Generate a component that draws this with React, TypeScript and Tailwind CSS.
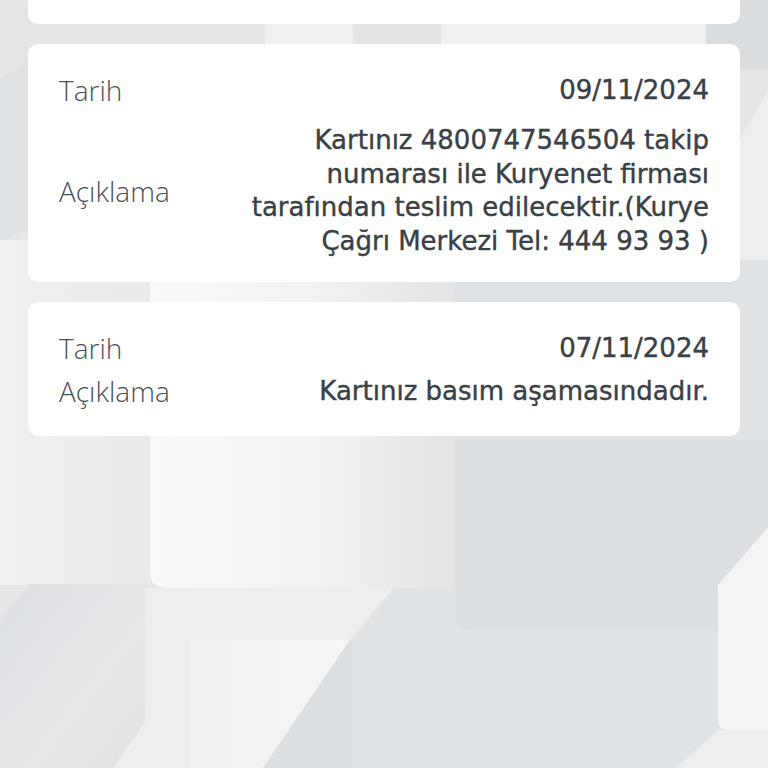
import React from "react";

type Entry = {
  date: string;
  lines: string[];
  gap: string;
  bottom: string;
};

const entries: Entry[] = [
  {
    date: "09/11/2024",
    lines: [
      "Kartınız 4800747546504 takip",
      "numarası ile Kuryenet firması",
      "tarafından teslim edilecektir.(Kurye",
      "Çağrı Merkezi Tel: 444 93 93 )",
    ],
    gap: "mt-[17px]",
    bottom: "pb-[24px]",
  },
  {
    date: "07/11/2024",
    lines: ["Kartınız basım aşamasındadır."],
    gap: "mt-[9px]",
    bottom: "pb-[28px]",
  },
];

function Backdrop() {
  return (
    <svg
      className="absolute inset-0 h-full w-full"
      viewBox="0 0 768 768"
      preserveAspectRatio="none"
    >
      <defs>
        <linearGradient id="soft" x1="0" y1="0" x2="1" y2="0">
          <stop offset="0" stopColor="#f8f9fa" />
          <stop offset="0.55" stopColor="#f0f2f3" />
          <stop offset="1" stopColor="#e2e4e6" />
        </linearGradient>
        <linearGradient id="leftcol" x1="0" y1="0" x2="1" y2="0">
          <stop offset="0" stopColor="#eef0f2" />
          <stop offset="1" stopColor="#e8eaec" />
        </linearGradient>
        <linearGradient id="hexdark" x1="0" y1="0" x2="1" y2="1">
          <stop offset="0" stopColor="#dcdfe2" />
          <stop offset="0.6" stopColor="#e6e8ea" />
          <stop offset="1" stopColor="#dfe2e4" />
        </linearGradient>
        <linearGradient id="lowlight" x1="0" y1="0" x2="1" y2="0">
          <stop offset="0" stopColor="#eef0f1" />
          <stop offset="1" stopColor="#f5f6f7" />
        </linearGradient>
      </defs>
      <rect width="768" height="768" fill="#e4e6e8" />

      {/* upper strips between cards */}
      <rect x="265" y="0" width="88" height="300" fill="#eff0f2" />
      <polygon points="441,0 706,0 706,300 441,300" fill="#eef0f1" />
      <polygon points="353,0 441,0 441,300 380,300" fill="#e2e4e6" />
      <rect x="706" y="0" width="62" height="70" fill="#dadde0" />
      <polygon points="768,90 740,140 740,440 768,440" fill="#eceef0" />
      <polygon points="0,80 28,60 28,230 0,240" fill="#dfe2e4" />

      {/* left column */}
      <rect x="0" y="240" width="150" height="345" fill="url(#leftcol)" />

      {/* darker right block */}
      <polygon points="455,260 768,260 768,768 353,768 353,640 515,440 455,440" fill="#e0e3e5" />
      <path d="M455 440 H768 V630 H470 Q455 630 455 615 Z" fill="#dcdfe2" />

      {/* light rounded panel */}
      <path d="M150 260 H455 V588 H166 Q150 588 150 572 Z" fill="url(#soft)" />

      {/* right hexagon */}
      <path d="M768 527 L718 585 V720 Q718 730 728 730 H768 Z" fill="#f3f4f5" />
      <polygon points="768,730 718,730 676,768 768,768" fill="#eceef0" />

      {/* bottom-left hexagon */}
      <path d="M0 620 L30 584 H138 Q145 584 145 591 V722 L113 768 H0 Z" fill="url(#hexdark)" />

      {/* lower middle pieces */}
      <polygon points="145,588 393,588 350,640 190,640 190,768 113,768 145,722" fill="#eceef0" />
      <polygon points="190,640 350,640 263,768 190,768" fill="url(#lowlight)" />
      <polygon points="263,768 350,640 353,640 353,768" fill="#dcdfe1" />
    </svg>
  );
}

const labelFont = { fontFamily: '"Open Sans", "Noto Sans", sans-serif' };
const valueFont = { fontFamily: '"DejaVu Sans", "Noto Sans", sans-serif' };

function HistoryCard({ entry }: { entry: Entry }) {
  return (
    <div className={`rounded-[10px] bg-white px-[31px] pt-[29px] ${entry.bottom}`}>
      <div className="flex items-center justify-between leading-[34px]">
        <span className="text-[28px] font-light text-[#4a4f54]" style={labelFont}>
          Tarih
        </span>
        <span
          className="text-[26px] text-[#394046] [-webkit-text-stroke:0.4px_#394046]"
          style={valueFont}
        >
          {entry.date}
        </span>
      </div>
      <div className={`flex items-center justify-between ${entry.gap}`}>
        <span className="text-[28px] font-light leading-[34px] text-[#4a4f54]" style={labelFont}>
          Açıklama
        </span>
        <p
          className="text-right text-[26px] leading-[33.6px] text-[#394046] [-webkit-text-stroke:0.4px_#394046]"
          style={valueFont}
        >
          {entry.lines.map((line, i) => (
            <React.Fragment key={i}>
              {line}
              {i < entry.lines.length - 1 && <br />}
            </React.Fragment>
          ))}
        </p>
      </div>
    </div>
  );
}

export default function App() {
  return (
    <div className="relative h-[768px] w-full overflow-hidden">
      <Backdrop />
      <div className="relative flex flex-col gap-5 px-7">
        {/* previous card, scrolled past */}
        <div className="h-[24px] rounded-b-[10px] bg-white" />
        {entries.map((entry) => (
          <HistoryCard key={entry.date} entry={entry} />
        ))}
      </div>
    </div>
  );
}
